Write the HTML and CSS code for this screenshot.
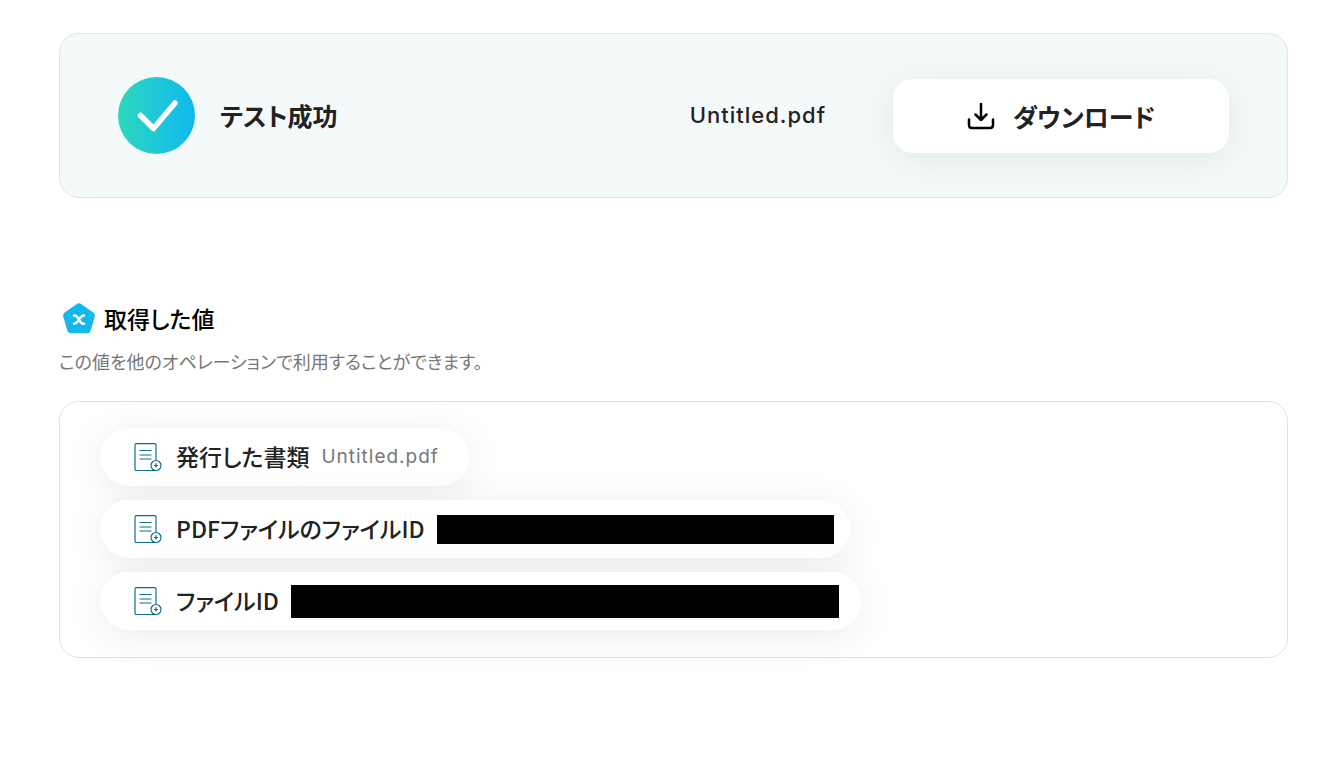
FILE: index.html
```html
<!DOCTYPE html>
<html lang="ja">
<head>
    <meta charset="UTF-8">
    <meta name="viewport" content="width=device-width, initial-scale=1">
    <title>テスト成功</title>
    <link rel="stylesheet" href="styles.css">
</head>
<body>
    <svg class="sprite" aria-hidden="true">
        <symbol id="icon-document" viewBox="0 0 28 28">
            <rect x="1" y="0.6" width="21" height="27" rx="1.5" />
            <path d="M6 7.5h11M6 12h11M6 16h11" />
            <circle cx="22" cy="22.5" r="5" fill="#fff" />
            <path d="M22 20.7v3.6M20.2 22.5h3.6" />
        </symbol>
    </svg>

    <main class="page">
        <section class="result">
            <svg class="result-icon" viewBox="0 0 77 77" aria-hidden="true">
                <defs>
                    <linearGradient id="successGradient">
                        <stop offset="0" stop-color="#2dd8bd" />
                        <stop offset="1" stop-color="#10b8f0" />
                    </linearGradient>
                </defs>
                <circle cx="38.5" cy="38.5" r="38.5" fill="url(#successGradient)" />
                <path d="M22.5 38.5L35.5 51.5L57 26" fill="none" stroke="#fff" stroke-width="5.5" stroke-linecap="round" stroke-linejoin="round" />
            </svg>
            <h1 class="result-title">テスト成功</h1>
            <span class="result-file">Untitled.pdf</span>
            <button type="button" class="download">
                <svg class="download-icon" viewBox="0 0 28 28" aria-hidden="true">
                    <path d="M14 2v16M8.5 12.5L14 18l5.5-5.5M2 17.5v5.5q0 3 3 3h18q3 0 3-3v-5.5" />
                </svg>
                ダウンロード
            </button>
        </section>

        <section class="values">
            <h2 class="values-title">
                <svg class="values-icon" viewBox="0 0 32 31" aria-hidden="true">
                    <path d="M13.5 1.2Q16 -0.5 18.5 1.2L30.3 9.6Q32.5 11.2 31.7 13.8L27.7 27.5Q26.8 30.3 24 30.3H8Q5.2 30.3 4.3 27.5L0.3 13.8Q-0.5 11.2 1.7 9.6Z" fill="#14b8eb" />
                    <path d="M11 12.5C12.5 12.2 13.7 13 14.5 14.5L17.5 19C18.5 20.5 19.5 21.2 21 20.8M21 12.5C19.5 12.5 18.5 13.2 17.5 14.5L14.5 18.5C13.5 20 12.5 20.8 11 20.8" fill="none" stroke="#fff" stroke-width="2.4" stroke-linecap="round" />
                </svg>
                取得した値
            </h2>
            <p class="values-note">この値を他のオペレーションで利用することができます。</p>

            <ul class="chips">
                <li class="chip">
                    <svg class="chip-icon" aria-hidden="true"><use href="#icon-document" /></svg>
                    <span class="chip-label">発行した書類</span>
                    <span class="chip-value">Untitled.pdf</span>
                </li>
                <li class="chip chip-file">
                    <svg class="chip-icon" aria-hidden="true"><use href="#icon-document" /></svg>
                    <span class="chip-label">PDFファイルのファイルID</span>
                    <span class="mask mask-short"></span>
                </li>
                <li class="chip chip-id">
                    <svg class="chip-icon" aria-hidden="true"><use href="#icon-document" /></svg>
                    <span class="chip-label">ファイルID</span>
                    <span class="mask mask-long"></span>
                </li>
            </ul>
        </section>
    </main>
</body>
</html>
```
FILE: styles.css
```css
* {
    box-sizing: border-box;
}

body {
    margin: 0;
    background: #fff;
    color: #222;
    font-family: "Noto Sans CJK JP", sans-serif;
    font-feature-settings: "palt";
}

.sprite {
    display: none;
}

.page {
    padding: 33px 30px 33px 59px;
}

.result {
    display: flex;
    align-items: center;
    padding: 43px 58px;
    border: 1px solid #dfe5e5;
    border-radius: 20px;
    background: #f4fafa;
}

.result-icon {
    flex: none;
    width: 77px;
    height: 77px;
}

.result-title {
    flex: 1;
    margin: 0 0 2px 25px;
    font-size: 25px;
    font-weight: 700;
    line-height: 36px;
}

.result-file {
    margin: 0 67px 2px 0;
    font-family: Inter, sans-serif;
    font-size: 22px;
    font-weight: 500;
    letter-spacing: 1px;
}

.download {
    display: flex;
    align-items: center;
    justify-content: center;
    gap: 18px;
    width: 336px;
    height: 74px;
    padding: 0;
    border: none;
    border-radius: 20px;
    background: #fff;
    box-shadow: 0 6px 40px rgba(0, 0, 0, 0.08);
    color: #222;
    font-family: inherit;
    font-size: 25px;
    font-weight: 700;
    font-feature-settings: inherit;
    line-height: 36px;
    cursor: pointer;
}

.download-icon {
    width: 28px;
    height: 28px;
    fill: none;
    stroke: #000;
    stroke-width: 2.5;
    stroke-linecap: round;
    stroke-linejoin: round;
}

.values {
    margin-top: 104px;
}

.values-title {
    display: flex;
    align-items: center;
    gap: 9px;
    margin: 0;
    padding-left: 4px;
    color: #000;
    font-size: 23px;
    font-weight: 500;
    line-height: 32px;
}

.values-icon {
    width: 32px;
    height: 31px;
}

.values-note {
    margin: 14px 0 27px;
    color: #777;
    font-size: 18px;
    line-height: 26px;
}

.chips {
    display: flex;
    flex-direction: column;
    align-items: flex-start;
    gap: 14px;
    margin: 0;
    padding: 26px 40px 27px;
    border: 1px solid #e2e2e2;
    border-radius: 20px;
    list-style: none;
}

.chip {
    display: flex;
    align-items: center;
    height: 58px;
    padding: 0 30px 0 34px;
    border-radius: 29px;
    background: #fff;
    box-shadow: 0 6px 40px rgba(0, 0, 0, 0.08);
}

.chip-file {
    padding-right: 16px;
}

.chip-id {
    padding-right: 22px;
}

.chip-icon {
    width: 28px;
    height: 28px;
    margin-right: 14px;
    fill: none;
    stroke: #0f6f89;
    stroke-width: 1.2;
    stroke-linecap: round;
}

.chip-label {
    margin: 0 12px 3px 0;
    font-size: 23px;
    font-weight: 500;
    line-height: 32px;
}

.chip-value {
    margin-bottom: 2px;
    color: #777;
    font-family: Inter, sans-serif;
    font-size: 19px;
    letter-spacing: 1px;
}

.mask {
    background: #000;
}

.mask-short {
    width: 397px;
    height: 29px;
}

.mask-long {
    width: 548px;
    height: 33px;
}
```
